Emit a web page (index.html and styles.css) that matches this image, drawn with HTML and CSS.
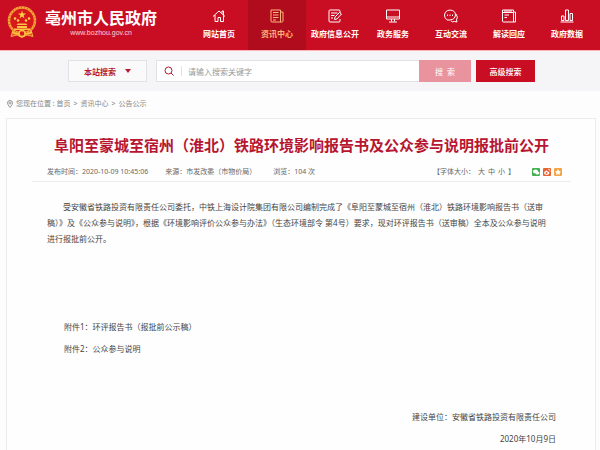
FILE: index.html
```html
<!DOCTYPE html>
<html lang="zh-CN">
<head>
    <meta charset="UTF-8">
    <meta name="viewport" content="width=device-width, initial-scale=1.0">
    <title>亳州市人民政府</title>
    <link rel="stylesheet" href="styles.css">
</head>
<body>
    <header class="header">
        <a class="logo" href="#">
            <svg class="logo-emblem" viewBox="0 0 60 64" aria-hidden="true">
                <path d="M12 48 L8 60 L20 57 L30 62 L40 57 L52 60 L48 48Z" fill="#e8501c" stroke="#f6b042" stroke-width="2"/>
                <circle cx="30" cy="28" r="26" fill="#d8191b" stroke="#f5a63a" stroke-width="5"/>
                <circle cx="30" cy="28" r="26" fill="none" stroke="#e2621f" stroke-width="3" stroke-dasharray="2 4"/>
                <path d="M30 8l2 6h6l-5 4 2 6-5-4-5 4 2-6-5-4h6z" fill="#ffd04a"/>
                <g fill="#ffd04a">
                    <circle cx="16" cy="24" r="2.5"/>
                    <circle cx="22" cy="28" r="2.5"/>
                    <circle cx="38" cy="28" r="2.5"/>
                    <circle cx="44" cy="24" r="2.5"/>
                </g>
                <path d="M22 34h16l3 3H19zM20 39h20v4H20zM14 44h32v3H14z" fill="#ffc545"/>
                <circle cx="30" cy="54" r="6" fill="#d8191b" stroke="#f9bd43" stroke-width="3"/>
                <path d="M10 51q10 6 14 3M50 51q-10 6-14 3" fill="none" stroke="#ffc545" stroke-width="3"/>
            </svg>
            <span class="logo-text">
                <span class="logo-name">亳州市人民政府</span>
                <span class="logo-url">www.bozhou.gov.cn</span>
            </span>
        </a>
        <nav class="nav">
            <a class="nav-item" href="#">
                <svg class="nav-icon" viewBox="0 0 28 28"><path d="M2 15L14 4l12 11M6 12v13h6v-8h5v8h6V12M20 9V4h3v8"/></svg>
                网站首页
            </a>
            <a class="nav-item active" href="#">
                <svg class="nav-icon" viewBox="0 0 28 28"><path d="M2 2h19v24H4q-2 0-2-2zM21 6h5v18q0 2-3 2h-3M6 7h11M6 12h11M6 17h11M6 22h6"/></svg>
                资讯中心
            </a>
            <a class="nav-item" href="#">
                <svg class="nav-icon" viewBox="0 0 28 28"><path d="M24 8V4q0-2-2-2H4Q2 2 2 4v20q0 2 2 2h18q2 0 2-2v-4M6 8h13M6 13h7M6 18h4M13 21l1-5 9-9 4 3-9 10z"/></svg>
                政府信息公开
            </a>
            <a class="nav-item" href="#">
                <svg class="nav-icon" viewBox="0 0 28 28"><path d="M1 2h26v18H1zM1 16h26M11 20v5M17 20v5M6 26h16"/></svg>
                政务服务
            </a>
            <a class="nav-item" href="#">
                <svg class="nav-icon" viewBox="0 0 28 28"><path d="M5 21Q1 18 1 12 2 3 12 2q11 1 11 10-1 9-11 10H6zM24 10q5 6 1 12l1 4-5-1q-4 2-7-1M7 11v3M12 11v3M17 11v3"/></svg>
                互动交流
            </a>
            <a class="nav-item" href="#">
                <svg class="nav-icon" viewBox="0 0 28 28"><path d="M1 2h22v4h4v20H3q-2 0-2-2zM1 7h22v19M5 12h9M5 17h5M4 4h16"/></svg>
                解读回应
            </a>
            <a class="nav-item" href="#">
                <svg class="nav-icon" viewBox="0 0 28 28"><path d="M1 26h26M3 23v-9h5v9zM11 23V2h6v21zM20 23V9h5v14z"/></svg>
                政府数据
            </a>
        </nav>
    </header>

    <form class="search-bar">
        <div class="search-scope">
            <select class="scope-select" aria-label="搜索范围">
                <option>本站搜索</option>
            </select>
            <span class="scope-arrow"></span>
        </div>
        <div class="search-box">
            <svg class="search-icon" viewBox="0 0 20 20"><circle cx="9" cy="9" r="7"/><path d="M14 14l5 5"/></svg>
            <input class="search-input" type="text" placeholder="请输入搜索关键字" aria-label="搜索关键字">
            <button class="search-button" type="submit">搜&nbsp; 索</button>
        </div>
        <button class="advanced-button" type="button">高级搜索</button>
    </form>

    <div class="breadcrumb">
        <svg class="pin-icon" viewBox="0 0 12 16"><path d="M6 15Q1 9 1 6a5 5 0 0 1 10 0q0 3-5 9z"/><circle cx="6" cy="6" r="2"/></svg>
        <span>您现在位置 : <a href="#">首页</a></span>
        <span>&gt;</span>
        <a href="#">资讯中心</a>
        <span>&gt;</span>
        <a href="#">公告公示</a>
    </div>

    <main class="article">
        <h1 class="article-title">阜阳至蒙城至宿州（淮北）铁路环境影响报告书及公众参与说明报批前公开</h1>
        <div class="article-meta">
            <span>发布时间：2020-10-09 10:45:06</span>
            <span>来源：市发改委（市物价局）</span>
            <span>浏览：104 次</span>
            <span class="font-size">【字体大小：<a href="#">大</a><a href="#">中</a><a href="#">小</a>】</span>
            <span class="share">
                <a class="share-link wechat" href="#" aria-label="微信">
                    <svg viewBox="0 0 16 16"><ellipse cx="7" cy="7" rx="5" ry="4"/><ellipse cx="11" cy="10" rx="4" ry="3"/></svg>
                </a>
                <a class="share-link weibo" href="#" aria-label="微博">
                    <svg viewBox="0 0 16 16"><path d="M2 10q0-4 5-5 2 0 2 2 4 0 4 3-1 4-6 4-5-1-5-4z"/><path d="M10 2q4 0 4 5" fill="none" stroke="#fff" stroke-width="1.5"/><circle cx="7" cy="10" r="2" fill="#e8622f"/></svg>
                </a>
                <a class="share-link qzone" href="#" aria-label="QQ空间">
                    <svg viewBox="0 0 16 16"><path d="M8 2l2 4 4 1-3 3 1 4-4-2-4 2 1-4-3-3 4-1z"/></svg>
                </a>
            </span>
        </div>
        <div class="article-content">
            <p class="paragraph">受安徽省铁路投资有限责任公司委托，中铁上海设计院集团有限公司编制完成了《阜阳至蒙城至宿州（淮北）铁路环境影响报告书（送审稿）》及《公众参与说明》，根据《环境影响评价公众参与办法》（生态环境部令 第4号）要求，现对环评报告书（送审稿）全本及公众参与说明进行报批前公开。</p>
            <ul class="attachments">
                <li><a href="#">附件1：环评报告书（报批前公示稿）</a></li>
                <li><a href="#">附件2：公众参与说明</a></li>
            </ul>
            <div class="signature">
                <p>建设单位：安徽省铁路投资有限责任公司</p>
                <p>2020年10月9日</p>
            </div>
        </div>
    </main>
</body>
</html>
```

FILE: styles.css
```css
* {
    margin: 0;
    padding: 0;
    box-sizing: border-box;
}

body {
    font-family: "Noto Sans", "Noto Sans CJK SC", sans-serif;
    font-size: 8px;
    line-height: 16px;
    color: #444;
    background: #fdfdfd;
    min-height: 100vh;
    display: flex;
    flex-direction: column;
}

a {
    color: inherit;
    text-decoration: none;
}

/* 页头 */
.header {
    display: flex;
    justify-content: space-between;
    height: 51px;
    padding-right: 4px;
    background: #c90d23;
    border-bottom: 1px solid #ffb3ba;
}

.logo {
    display: flex;
    gap: 8px;
    padding: 6px 0 0 7px;
    color: #fff;
}

.logo-emblem {
    width: 30px;
    height: 33px;
}

.logo-text {
    display: flex;
    flex-direction: column;
    align-items: center;
}

.logo-name {
    font-family: "Noto Sans CJK SC", sans-serif;
    font-size: 16px;
    font-weight: 700;
    line-height: 22px;
}

.logo-url {
    font-family: "Liberation Sans", sans-serif;
    font-size: 7px;
    line-height: 10px;
    color: #fbd5d9;
}

.nav {
    display: flex;
}

.nav-item {
    width: 58px;
    padding-top: 9px;
    display: flex;
    flex-direction: column;
    align-items: center;
    gap: 3px;
    font-weight: 700;
    white-space: nowrap;
    color: #fff;
}

.nav-item.active {
    background: #b00c1e;
    color: #ffb67c;
}

.nav-icon {
    width: 14px;
    height: 14px;
    fill: none;
    stroke: currentColor;
    stroke-width: 2;
}

/* 搜索栏 */
.search-bar {
    display: flex;
    padding: 9px 65px 9px 68px;
    background: #f5f5f7;
}

.search-bar input,
.search-bar select,
.search-bar button {
    font-family: inherit;
    font-size: 8px;
    border: none;
    outline: none;
}

.search-scope {
    display: flex;
    align-items: center;
    width: 79px;
    height: 22px;
    margin-right: 9px;
    padding: 0 15px;
    border: 1px solid #e2e2e6;
    background: #fafafa;
}

.search-bar .scope-select {
    flex: 1;
    appearance: none;
    background: transparent;
    font-weight: 700;
    color: #b51c32;
}

.scope-arrow {
    border: 3px solid transparent;
    border-top: 4px solid #b51c32;
    border-bottom: none;
}

.search-box {
    flex: 1;
    display: flex;
    align-items: center;
    height: 22px;
    padding-left: 7px;
    border: 1px solid #e2e2e6;
    border-right: none;
    background: #fff;
}

.search-icon {
    width: 10px;
    height: 10px;
    fill: none;
    stroke: #b51c32;
    stroke-width: 2;
}

.search-bar .search-input {
    flex: 1;
    min-width: 0;
    height: 10px;
    margin-left: 7px;
    padding-left: 6px;
    border-left: 1px solid #e2e2e6;
}

.search-input::placeholder {
    color: #999;
}

.search-button {
    width: 52px;
    height: 22px;
    background: #e9939f;
    color: #fff;
}

.advanced-button {
    width: 59px;
    height: 22px;
    margin-left: 5px;
    background: #c90d23;
    color: #fff;
    font-weight: 500;
}

/* 当前位置 */
.breadcrumb {
    display: flex;
    align-items: center;
    gap: 3px;
    padding: 5px 7px 6px;
    font-size: 7px;
    color: #888;
}

.pin-icon {
    width: 6px;
    height: 8px;
    fill: none;
    stroke: #999;
    stroke-width: 2;
}

/* 正文 */
.article {
    flex: 1;
    margin: 0 4px 0 6px;
    padding: 15px 24px 0 25px;
    border: 1px solid #ebebeb;
    border-bottom: none;
    background: #fefefe;
}

.article-title {
    font-family: "Noto Sans CJK SC", sans-serif;
    font-size: 15px;
    font-weight: 700;
    line-height: 22px;
    text-align: center;
    white-space: nowrap;
    color: #b71530;
}

.article-meta {
    display: flex;
    gap: 17px;
    margin-top: 8px;
    padding: 0 9px 1px 15px;
    border-bottom: 1px solid #ececec;
    font-size: 7px;
    white-space: nowrap;
    color: #666;
}

.font-size {
    display: flex;
    gap: 3px;
    margin-left: auto;
}

.share {
    display: flex;
    align-items: center;
    gap: 3px;
}

.share-link {
    display: flex;
    width: 8px;
    height: 8px;
    border-radius: 1px;
}

.share-link svg {
    width: 8px;
    height: 8px;
    fill: #fff;
}

.wechat {
    background: #45b052;
}

.weibo {
    background: #e8622f;
}

.qzone {
    background: #f3a447;
}

.article-content {
    padding: 17px 15px 0;
}

.paragraph {
    padding-right: 4px;
    text-indent: 2em;
}

.attachments {
    margin-top: 69px;
    padding-left: 17px;
    list-style: none;
    line-height: 22px;
}

.signature {
    margin-top: 46px;
    text-align: right;
    line-height: 22px;
}
```
